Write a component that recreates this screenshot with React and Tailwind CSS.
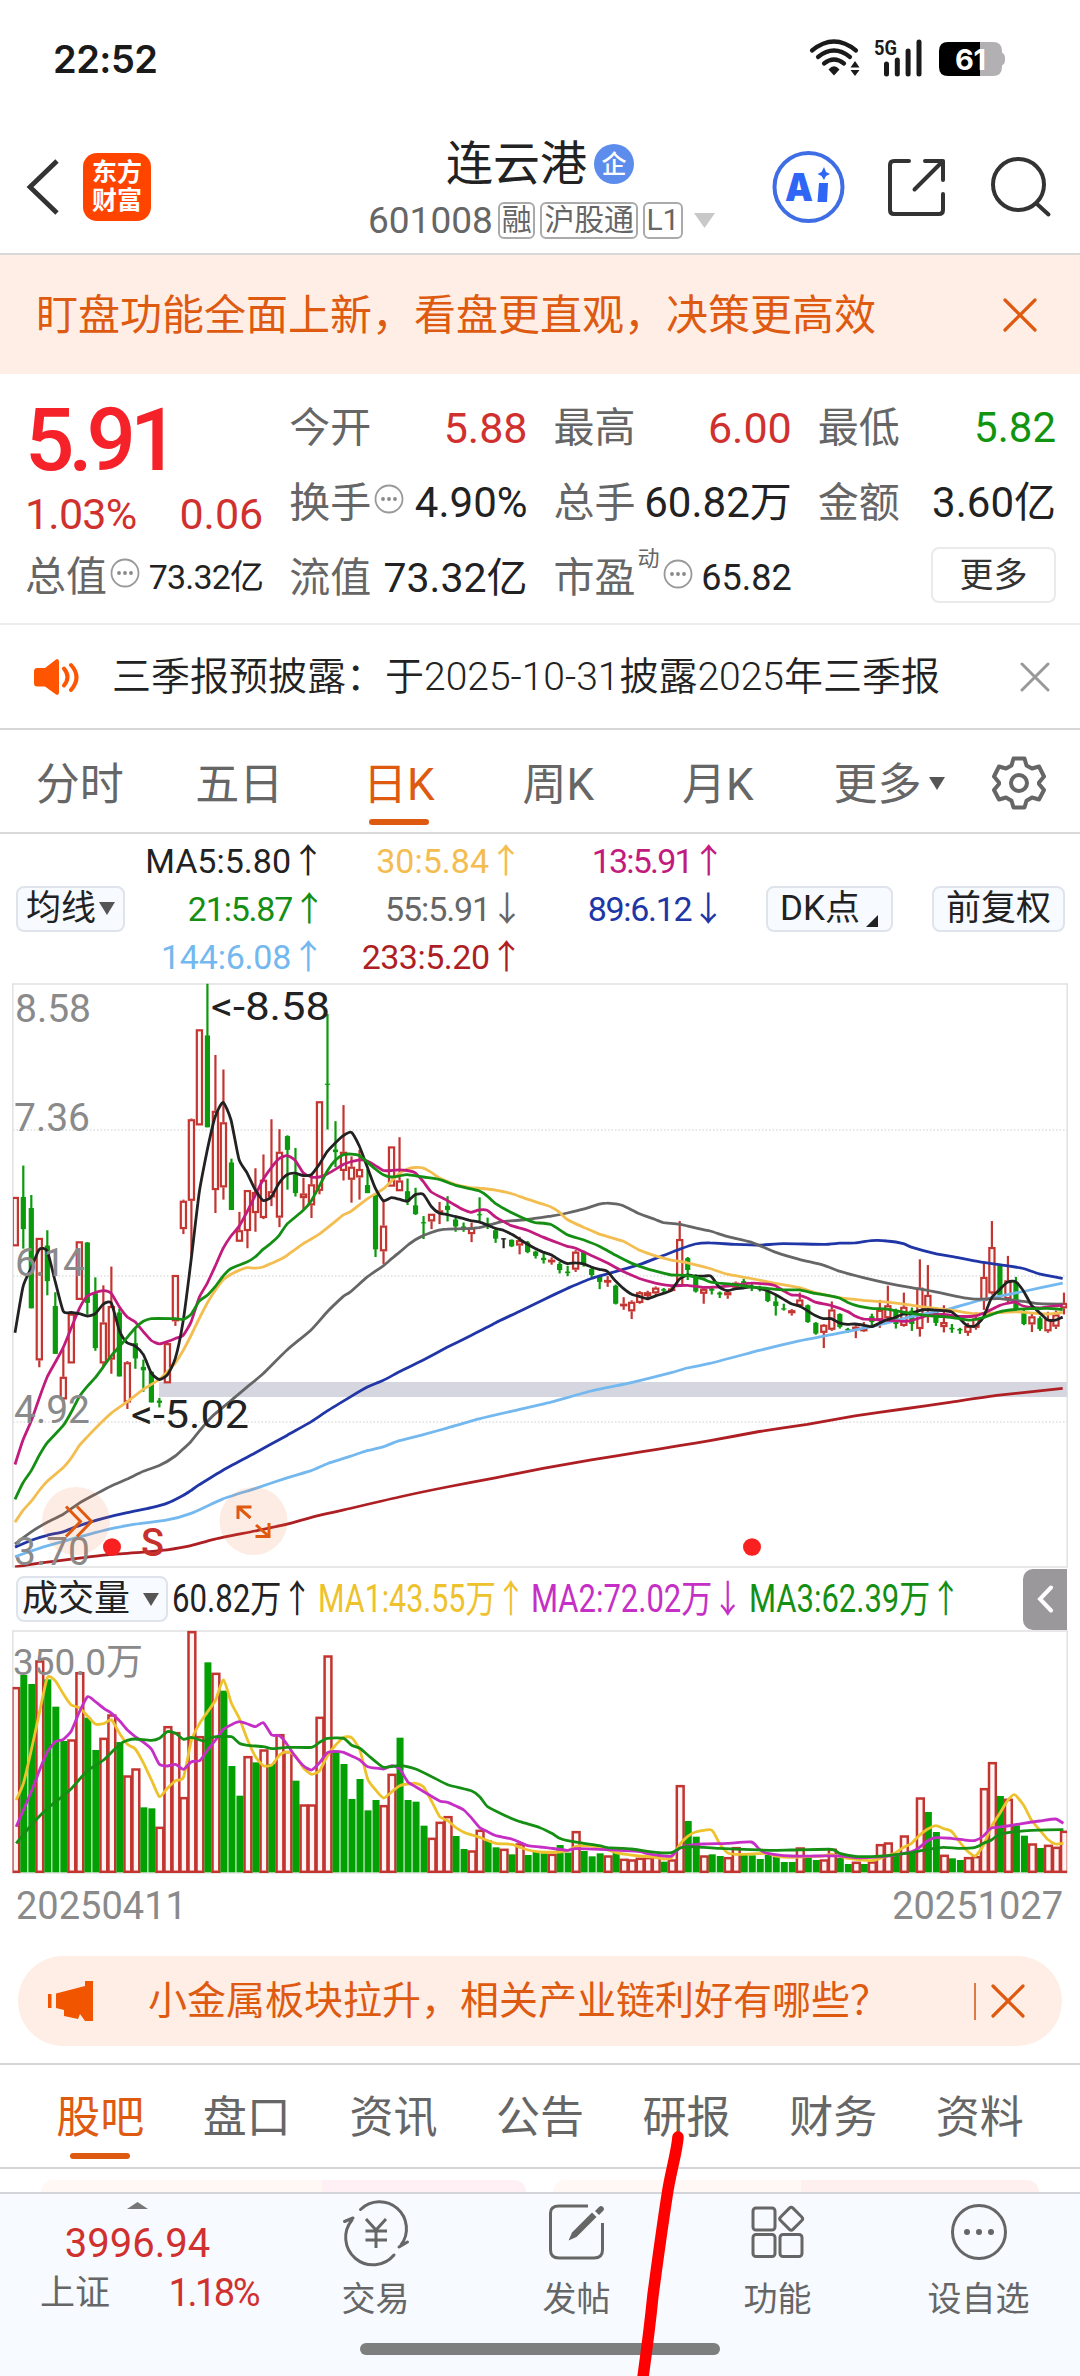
import React from "react";

const RED = "#c23531";
const GREEN = "#0b9a0b";

/* Price chart ------------------------------------------------------- */

const STEP = 8.005;
const barX = (i) => 15.3 + STEP * i;
const priceY = (v) => 970 + v / 2.613;
const volumeY = (v) => 1560 + v / 3;

// kind, high, body top, body bottom, low
const CANDLES = `r593,593,722,722 g511,593,677,728 g588,622,884,884 r700,700,1020,1038 g680,720,813,850 g842,878,1003,1003
r990,1063,1122,1135 r898,898,1028,1028 r709,709,862,862 g711,712,870,900 g803,845,988,995 r824,921,1028,1038
r775,878,1018,1055 g885,895,1062,1062 r1022,1025,1130,1147 g937,975,1015,1042 g1018,1037,1046,1102 g1048,1050,1130,1130
g1118,1125,1131,1143 r975,975,1080,1080 r797,797,918,930 r600,603,677,690 r388,390,603,745 r155,155,406,406
g36,171,411,411 r222,368,575,635 r260,398,568,600 g493,503,627,627 r632,680,710,710 r575,575,682,727
r518,580,635,684 r482,548,648,651 r390,578,594,617 r416,475,647,672 g432,434,470,574 g465,535,583,592
r543,584,596,626 r535,560,615,648 r342,343,577,586 g115,297,299,417 g395,469,476,515 r353,475,525,550
r487,514,548,608 r470,520,542,600 g520,562,583,583 g583,585,730,750 r600,668,735,768 r460,461,566,566
r437,550,578,578 g545,578,606,614 g569,615,638,640 g643,659,662,703 r636,637,657,677 r606,628,632,664
g591,616,627,657 g648,652,670,684 g660,670,675,684 r660,673,690,711 g594,638,641,657 g647,662,668,677
g676,680,702,713 k701,701,704,727 g704,705,722,724 r697,706,720,743 g708,712,737,740 g733,736,747,754
g741,752,758,767 r751,757,761,770 g763,768,784,793 g773,788,792,800 r732,736,783,789 g733,735,770,775
g778,781,797,804 g797,799,815,834 r800,810,815,828 g822,825,872,874 r855,872,878,888 r863,867,892,912
r839,842,870,872 r838,842,852,863 r827,830,845,852 g831,834,838,846 r826,832,837,840 r656,703,826,828
g750,753,784,810 g795,800,840,843 r828,833,846,872 g828,832,838,848 g840,843,848,857 r835,842,850,859
r814,817,830,835 g807,813,825,830 g820,825,830,839 g825,830,834,840 g836,840,865,868 g852,866,878,903
g872,884,887,890 r886,889,897,903 r843,861,878,882 g874,876,920,922 g920,922,950,953 r925,927,948,988
r866,887,940,943 g897,899,933,937 g935,938,942,948 r928,932,937,962 r920,937,944,946 g898,905,920,935
r862,888,915,935 r825,876,910,920 g885,890,925,937 r843,880,930,932 g882,890,925,943 r756,830,938,958
r771,849,890,922 g882,884,922,930 r876,920,933,947 g925,935,939,948 g935,938,942,951 r922,930,948,956
r895,910,935,940 r765,802,865,888 r656,724,845,848 g768,770,850,855 r747,811,860,872 g802,815,885,888
g888,893,925,928 r895,905,926,946 g905,910,938,943 r893,912,944,948 r890,900,932,938 r843,870,884,900`
  .split(/\s+/)
  .map((s) => [s[0], ...s.slice(1).split(",").map(Number)]);

// Each average is sampled in three panes that start at these x positions.
const PANES = [0, 350, 710];
const AVERAGES = [
  ["#ae1f24", "45,1560 118,1550 238,1537 334,1527 430,1521 502,1515 573,1504 645,1487 765,1466 861,1448 958,1425",
    "0,1407 148,1377 291,1351 436,1327 579,1302 724,1280 868,1260 988,1243",
    "0,1230 148,1206 292,1187 435,1165 580,1147 724,1129 868,1111 1058,1093"],
  ["#73b8ef", "45,1533 118,1511 190,1493 262,1476 334,1460 406,1448 502,1437 573,1420 669,1382 765,1355 861,1327 934,1308 982,1290",
    "0,1271 52,1256 100,1246 148,1230 220,1214 291,1197 387,1173 484,1153 603,1129 724,1100 844,1078 964,1052 1012,1040",
    "0,1028 148,994 268,969 364,953 484,932 604,906 724,884 820,861 940,840 1058,818"],
  ["#2036a6", "45,1508 94,1490 142,1477 190,1468 238,1452 310,1433 382,1418 454,1405 502,1393 549,1373 573,1360 598,1345 669,1307 765,1262 861,1216 934,1180 982,1152",
    "0,1116 52,1090 100,1072 148,1050 220,1019 291,986 363,955 436,922 508,892 579,862 652,832 724,806 796,788 868,770 940,746 988,730 1036,716",
    "0,713 75,717 148,719 220,715 340,717 388,714 435,713 484,707 531,708 580,715 604,724 676,741 748,752 820,764 892,773 940,780 988,794 1058,806"],
  ["#666666", "45,1500 94,1468 142,1443 190,1422 238,1393 286,1370 334,1348 382,1330 430,1310 478,1295 526,1270 549,1252 573,1232 598,1205 622,1180 645,1160 693,1125 741,1090 789,1055 861,993 934,940 982,893 1030,853",
    "0,842 52,802 100,773 124,755 148,738 172,720 196,705 220,694 244,686 267,680 291,677 339,676 387,673 436,662 460,657 532,652 603,643 652,635 700,625 748,612 771,609 796,611 820,616 868,637 916,652 940,660 988,664 1036,674",
    "0,682 51,696 123,711 196,737 268,756 340,771 388,787 460,804 531,818 604,830 676,841 748,854 795,860 868,859 940,866 988,872 1058,873"],
  ["#f3bd50", "45,1443 69,1412 94,1388 118,1360 142,1336 190,1300 214,1275 238,1243 262,1220 286,1198 334,1158 382,1128 430,1096 478,1070 502,1050 526,1027 549,995 573,955 598,910 622,870 645,838 669,810 693,795 717,785 741,778 765,779 789,776 813,767 837,758 861,746 910,715 958,690 1006,657 1030,640",
    "4,630 52,598 100,572 124,552 148,532 172,520 196,516 220,518 244,529 267,543 315,560 363,569 387,570 436,575 484,584 532,599 579,612 603,619 627,632 652,652 700,672 748,690 771,696 820,709 868,732 916,747 964,758 1012,765",
    "0,780 51,795 123,806 196,819 268,830 316,843 388,856 460,863 531,868 604,876 652,882 724,889 795,898 868,895 916,893 1012,899 1058,895"],
  ["#c21b7e", "45,1292 69,1228 94,1178 118,1118 142,1063 166,1025 190,986 214,935 238,885 262,852 286,843 310,838 334,845 358,880 382,907 405,919 430,945 454,968 478,977 502,971 526,963 549,955 573,920 598,855 622,818 645,775 669,728 693,695 717,670 741,632 765,590 789,548 813,518 837,493 861,485 885,497 910,530 934,541 958,541 982,533 1006,521 1030,508 1053,501",
    "28,496 52,499 76,511 100,524 124,524 148,522 172,524 196,530 220,553 244,580 291,602 339,626 363,633 387,627 411,628 436,645 460,657 484,668 532,680 579,698 627,714 652,722 677,727 724,746 771,765 820,788 868,806 916,818 964,825 1012,824 1060,829",
    "0,829 27,828 75,824 123,818 172,821 196,825 220,838 244,849 268,850 292,857 316,868 364,877 412,892 435,904 460,912 484,913 531,915 580,918 604,916 652,903 700,900 748,905 795,904 820,897 868,877 892,871 916,868 940,878 988,883 1012,880 1058,876"],
  ["#222222", "45,948 69,828 94,778 118,730 142,735 166,815 190,892 214,895 238,898 262,904 286,898 310,873 334,870 358,942 380,973 405,982 430,1005 454,1053 478,1070 502,1058 526,1015 549,920 573,760 598,580 622,470 645,385 669,346 693,392 717,495 741,530 765,573 789,602 813,594 837,557 861,535 885,531 910,537 934,535 958,508 982,474 1006,452 1030,433",
    "4,424 28,460 52,515 76,570 100,603 124,595 148,599 172,604 196,587 220,586 244,618 267,635 291,639 315,644 339,649 363,655 387,658 411,666 436,675 460,680 484,690 508,703 532,716 556,728 579,737 603,744 627,757 652,767 677,765 700,768 724,776 748,782 771,787 796,812 820,832 844,847 868,853 892,859 916,852 940,845 964,837 988,808 1012,797 1036,800 1060,800",
    "3,800 27,828 51,838 75,833 99,831 123,828 148,832 172,838 196,848 220,860 244,872 268,878 292,890 316,903 340,911 364,911 388,922 412,926 435,925 460,928 484,932 508,923 531,914 555,908 580,899 604,898 627,890 652,887 676,889 700,890 724,893 748,910 771,929 795,930 820,908 844,858 868,836 892,816 916,814 940,838 964,875 988,895 1012,914 1036,915 1058,907"],
  ["#148f14", "45,1383 69,1340 94,1308 118,1268 142,1235 190,1190 214,1155 238,1115 262,1088 286,1065 310,1037 334,1008 382,960 405,936 430,918 454,911 526,911 549,913 573,900 598,865 622,850 645,828 669,800 693,780 741,763 765,750 789,730 813,714 837,694 861,664 910,628 934,603 958,565 982,525 1006,497 1030,483",
    "4,481 28,485 52,502 76,520 100,535 124,541 148,538 172,535 220,541 267,547 315,562 363,572 387,577 411,590 436,610 484,634 532,653 556,660 603,665 652,692 700,705 748,722 796,745 844,766 892,781 940,792 964,797 1012,798 1060,808",
    "0,815 27,818 75,822 123,828 172,832 220,836 268,836 316,845 364,852 388,857 412,868 435,876 484,884 531,886 580,894 652,903 700,906 748,911 780,915 820,908 868,893 916,887 964,885 1012,884 1058,887"],
];

const VOLUMES = `r383 g345 g372 r303 g358 g440 g543 r540 r338 g473 g570 r535 r465 g546 r648 r627 g742 g745 r802 r500 r518 r713
r215 r530 g307 r340 g392 g618 g707 r590 g607 r570 g612 r524 r575 g662 r735 r735 r472 r288 g575 g612 g717 g657 g751 g720 r737
r643 g533 g720 g725 g797 r835 r787 r770 g828 g867 r873 r811 g840 g862 r868 g883 r852 g885 g875 g880 r883 g855 g878 r815 g873
g889 g880 r888 g878 r898 r900 r895 r893 r890 g905 r900 r677 g783 g830 r888 g883 g888 r893 r863 g885 g886 g897 g885 g891 g906
g906 r864 g893 g900 r900 r868 g894 g912 r907 g912 r906 r854 r849 g885 r828 g877 r714 g756 g816 r886 g895 g900 r893 r890 r686
r608 g708 r718 g796 g827 r852 g864 r856 r862 r814`
  .split(/\s+/)
  .map((s) => [s[0], Number(s.slice(1))]);

const VOLUME_PANES = [0, 540];
const VOLUME_AVERAGES = [
  ["#edc22d", "47,720 68,670 91,570 115,455 138,352 161,363 184,402 207,435 231,443 254,468 277,492 301,491 324,480 347,520 370,553 393,567 417,610 440,660 463,710 486,685 510,662 533,652 556,540 580,490 603,455 626,420 649,360 672,430 695,475 719,540 742,590 765,617 789,615 812,585 825,577 842,577 860,590 882,625 905,643 928,632 951,587 975,555 998,532 1021,533 1045,570 1068,658 1091,690 1114,714 1138,695 1161,677 1184,672 1207,670 1231,682 1254,725 1277,770 1300,782 1324,803 1347,817 1370,825 1393,832 1440,850 1486,853 1510,862 1533,870",
    "0,876 57,876 80,872 103,860 127,857 173,862 220,878 243,882 290,888 336,892 359,897 382,893 405,855 428,830 452,816 498,810 521,850 544,878 568,883 614,882 661,880 684,888 730,892 777,890 823,888 847,883 893,895 939,900 963,902 985,896 1032,878 1056,862 1079,850 1102,826 1125,808 1149,797 1172,806 1195,814 1218,845 1241,873 1264,888 1288,855 1311,800 1334,762 1358,722 1378,704 1404,735 1427,780 1451,810 1474,838 1497,852 1520,850"],
  ["#c52fc5", "47,800 91,695 115,630 138,575 161,545 184,538 207,513 231,455 254,410 277,425 301,445 324,460 347,482 370,510 393,530 417,547 440,568 463,613 486,618 510,613 533,628 556,605 580,602 603,570 626,540 649,508 672,494 695,485 719,492 742,500 765,488 789,525 812,527 835,555 858,590 882,618 905,630 928,608 951,578 975,574 998,577 1021,588 1045,600 1068,620 1114,627 1138,617 1161,627 1184,665 1207,680 1231,695 1277,723 1300,727 1324,738 1347,750 1370,775 1393,803 1416,815 1440,827 1486,837 1533,857",
    "0,861 34,865 80,871 103,866 173,868 243,872 290,875 313,881 359,888 382,888 405,865 428,857 475,852 544,850 614,846 637,868 661,880 730,888 800,888 870,888 916,893 963,892 1032,885 1079,875 1102,862 1125,843 1149,833 1195,835 1241,841 1264,841 1288,828 1311,804 1358,798 1404,790 1451,783 1497,777 1520,790"],
  ["#148f14", "47,850 91,795 138,745 184,707 207,686 231,658 254,632 301,600 347,553 370,541 393,537 440,541 463,535 486,515 510,520 533,538 556,532 590,543 603,538 626,530 672,530 695,550 719,556 765,560 790,566 835,562 905,562 928,547 951,535 998,535 1021,556 1045,565 1068,585 1091,605 1114,622 1161,617 1207,627 1254,650 1300,674 1370,693 1393,710 1416,740 1463,765 1510,785",
    "0,803 34,820 57,835 80,842 127,850 173,857 197,863 266,867 336,877 382,878 405,865 428,860 475,862 521,865 614,869 684,871 730,870 847,868 870,880 916,889 963,890 1009,887 1079,878 1125,868 1172,862 1218,865 1264,862 1288,850 1311,840 1334,823 1381,815 1427,811 1520,809"],
];

// Joins the panes of a series into one smooth path.
function smoothPath(segments, starts, xScale, toY) {
  const p = segments.flatMap((seg, k) =>
    seg.split(" ").map((pair) => {
      const [x, v] = pair.split(",").map(Number);
      return [starts[k] + x / xScale, toY(v)];
    })
  );
  let d = `M${p[0][0].toFixed(1)} ${p[0][1].toFixed(1)}`;
  for (let i = 0; i < p.length - 1; i++) {
    const a = p[i - 1] || p[i];
    const b = p[i];
    const c = p[i + 1];
    const e = p[i + 2] || c;
    const t = 10;
    d += `C${[
      b[0] + (c[0] - a[0]) / t, b[1] + (c[1] - a[1]) / t,
      c[0] - (e[0] - b[0]) / t, c[1] - (e[1] - b[1]) / t,
      c[0], c[1],
    ].map((n) => n.toFixed(1)).join(" ")}`;
  }
  return d;
}

function Candle({ i, data }) {
  const [kind, high, top, bottom, low] = data;
  const x = barX(i);
  const [h, t, b, l] = [high, top, bottom, low].map(priceY);
  if (kind === "r") {
    return (
      <g stroke={RED} strokeWidth="2.2" fill="none">
        {t - h > 0.5 && <path d={`M${x} ${h}V${t}`} />}
        {l - b > 0.5 && <path d={`M${x} ${b}V${l}`} />}
        <rect x={x - 2.6} y={t + 1} width="5.2" height={Math.max(b - t - 2, 0.6)} fill="#fff5f4" />
      </g>
    );
  }
  const color = kind === "k" ? "#222" : GREEN;
  return (
    <g fill={color}>
      <rect x={x - 1.1} y={h} width="2.2" height={l - h} />
      <rect x={x - 2.6} y={t} width="5.2" height={Math.max(b - t, 1.2)} />
    </g>
  );
}

function PriceChart() {
  return (
    <svg className="block h-[585px] w-[1080px] shrink-0 overflow-visible" viewBox="0 983 1080 585" fontFamily='Roboto, "Noto Sans CJK SC", sans-serif'>
      <defs>
        <clipPath id="price-frame"><rect x="13" y="983" width="1054" height="584.5" /></clipPath>
      </defs>
      <path d="M13 1130H1067M13 1276H1067M13 1422H1067" stroke="#dedede" strokeWidth="1.3" strokeDasharray="1.5 2" />
      <rect x="12.8" y="984" width="1054.4" height="583" fill="none" stroke="#e3e3e3" strokeWidth="1.6" />
      <rect x="159" y="1382" width="908" height="15" fill="#d5d6df" />
      <g clipPath="url(#price-frame)">
        {CANDLES.map((c, i) => <Candle key={i} i={i} data={c} />)}
        {AVERAGES.map(([color, ...segs]) => (
          <path key={color} d={smoothPath(segs, PANES, 3, priceY)} fill="none" stroke={color} strokeWidth="2.8" strokeLinejoin="round" />
        ))}
      </g>
      <g fill="#8a8a8a" fontSize="39">
        <text x="15" y="1022">8.58</text>
        <text x="14" y="1130.5">7.36</text>
        <text x="15" y="1276" textLength="70">6.14</text>
        <text x="14" y="1422.5">4.92</text>
        <text x="14" y="1565">3.70</text>
      </g>
      <g fill="#222" fontSize="39">
        <text x="211" y="1020" textLength="119" lengthAdjust="spacingAndGlyphs">&lt;-8.58</text>
        <text x="131" y="1428" textLength="118" lengthAdjust="spacingAndGlyphs">&lt;-5.02</text>
      </g>
      <circle cx="76" cy="1521" r="34" fill="#ee6a32" fillOpacity="0.13" />
      <circle cx="253.5" cy="1521" r="34" fill="#ee6a32" fillOpacity="0.13" />
      <g fill="none" stroke="#e0590f" strokeWidth="3">
        <path d="M66 1506.5L80.5 1521.5L66 1536.5M77 1506.5L91.5 1521.5L77 1536.5" />
        <path d="M238 1519V1507H251.5M238 1507L250.5 1518M255.500 1536.5H269V1523M269 1536.5L256 1525" />
      </g>
      <ellipse cx="112" cy="1547" rx="9" ry="8.8" fill="#f82020" />
      <ellipse cx="752" cy="1547" rx="9" ry="8.8" fill="#f82020" />
      <text x="141" y="1556" fontSize="38" fontWeight="500" fill="#c8302d">S</text>
    </svg>
  );
}

function VolumeChart() {
  const base = 1872.3;
  return (
    <svg className="block h-[244px] w-[1080px] shrink-0" viewBox="0 1630 1080 244" fontFamily='Roboto, "Noto Sans CJK SC", sans-serif'>
      <defs>
        <clipPath id="volume-frame"><rect x="12.5" y="1630" width="1054.5" height="243" /></clipPath>
      </defs>
      <rect x="12.8" y="1631" width="1054.4" height="242" fill="none" stroke="#e3e3e3" strokeWidth="1.6" />
      <g clipPath="url(#volume-frame)">
        {VOLUMES.map(([kind, v], i) => {
          const x = barX(i);
          const y = volumeY(v);
          return kind === "r" ? (
            <rect key={i} x={x - 2.9} y={y + 0.5} width="6.8" height={base - y - 1} fill="#fff5f4" stroke={RED} strokeWidth="2.5" />
          ) : (
            <rect key={i} x={x - 3} y={y} width="7" height={base - y} fill="#03a003" />
          );
        })}
        {VOLUME_AVERAGES.map(([color, ...segs]) => (
          <path key={color} d={smoothPath(segs, VOLUME_PANES, 2.904, volumeY)} fill="none" stroke={color} strokeWidth="2.8" strokeLinejoin="round" />
        ))}
      </g>
      <text x="13" y="1674.5" fontSize="37" fill="#8a8a8a">350.0万</text>
    </svg>
  );
}

/* Small pieces ------------------------------------------------------ */

function Cross({ className, size, width = 3 }) {
  return (
    <svg className={className} width={size} height={size} viewBox={`0 0 ${size} ${size}`} fill="none" stroke="currentColor" strokeWidth={width} strokeLinecap="round">
      <path d={`M2 2L${size - 2} ${size - 2}M${size - 2} 2L2 ${size - 2}`} />
    </svg>
  );
}

function Dots() {
  return (
    <svg className="shrink-0" width="30" height="30" viewBox="0 0 30 30">
      <circle cx="15" cy="15" r="13.5" fill="none" stroke="#999" strokeWidth="1.8" />
      <circle cx="9" cy="15" r="1.9" fill="#888" />
      <circle cx="15" cy="15" r="1.9" fill="#888" />
      <circle cx="21" cy="15" r="1.9" fill="#888" />
    </svg>
  );
}

function Caret({ className }) {
  return (
    <svg className={className} viewBox="0 0 16 12" fill="currentColor" preserveAspectRatio="none">
      <path d="M0 0H16L8 12Z" />
    </svg>
  );
}

function StatusBar() {
  return (
    <div className="flex h-[118px] shrink-0 items-center justify-between pl-[53px] pr-[74px]">
      <span className="font-[Inter,sans-serif] text-[38px] leading-none font-semibold tracking-[-0.5px] text-[#1a1a1a]">22:52</span>
      <svg width="197" height="60" viewBox="809 30 197 60">
        <g fill="none" stroke="#1a1a1a" strokeWidth="4.2" strokeLinecap="round">
          <path d="M812 51.5Q834 33.5 856 51.5M818 58Q834 45 850 58M824 64.5Q834 56.5 844 64.5" />
        </g>
        <path d="M828.5 70.5Q834 64 839.5 70.5L834 76.5Z" fill="#1a1a1a" />
        <path d="M850.5 68.5L855 62L859.5 68.5ZM850.5 71L855 77L859.5 71Z" fill="#1a1a1a" />
        <text x="874" y="55.5" fontFamily="Roboto, sans-serif" fontWeight="700" fontSize="21" textLength="23" lengthAdjust="spacingAndGlyphs" fill="#1a1a1a">5G</text>
        <path d="M886.5 65V75M897.3 61V75M908.1 52V75M919 43V75" stroke="#1a1a1a" strokeWidth="5" strokeLinecap="round" />
        <path d="M948 43H980V77H948Q939 77 939 68V52Q939 43 948 43Z" fill="#000" />
        <path d="M980 43H993Q1002 43 1002 52V53.5Q1005 55 1005 59V61Q1005 65 1002 66.5V68Q1002 77 993 77H980Z" fill="#b3b0b4" />
        <text x="955" y="71" fontFamily="Inter, sans-serif" fontWeight="700" fontSize="29" textLength="31" fill="#fff">61</text>
      </svg>
    </div>
  );
}

function Tag({ children }) {
  return (
    <span className="flex h-[37px] shrink-0 items-center rounded-[6px] border-2 border-[#aaa] px-[2px] text-[30px] leading-none tracking-[-0.3px] whitespace-nowrap text-[#666]">{children}</span>
  );
}

function Header() {
  return (
    <header className="flex h-[137px] shrink-0 items-center border-b-2 border-[#d9d9d9] pt-[2px] pl-[26px]">
      <svg width="34" height="58" viewBox="0 0 34 58" fill="none" stroke="#333" strokeWidth="4.8">
        <path d="M31 3L4 29L31 55" />
      </svg>
      <div className="ml-[23px] flex h-[68px] w-[68px] flex-col items-center justify-center rounded-[14px] bg-[#ff4400] text-[25px] leading-[28px] font-bold text-white">
        <span>东方</span>
        <span>财富</span>
      </div>
      <div className="ml-[217px] flex w-[345px] flex-col pt-[6px]">
        <div className="flex h-[54px] items-center pl-[78px]">
          <span className="text-[47px] leading-[54px] text-[#222]">连云港</span>
          <span className="ml-[7px] flex h-[40px] w-[40px] items-center justify-center rounded-full bg-[#5d8dec] text-[25px] leading-none font-medium text-white">企</span>
        </div>
        <div className="mt-[7px] flex h-[44px] items-center gap-[5px]">
          <span className="text-[37px] leading-none text-[#666]">601008</span>
          <Tag>融</Tag>
          <Tag>沪股通</Tag>
          <Tag>L1</Tag>
          <Caret className="ml-[6px] h-[15px] w-[21px] shrink-0 text-[#c8c8c8]" />
        </div>
      </div>
      <svg className="ml-[59px]" width="290" height="74" viewBox="772 150 290 74" fill="none">
        <circle cx="808.5" cy="187" r="34" stroke="#3f6de4" strokeWidth="4" />
        <text x="785" y="201" fontFamily="Inter, sans-serif" fontWeight="900" fontSize="39" textLength="28" lengthAdjust="spacingAndGlyphs" fill="#2f66f6">A</text>
        <path d="M819 183H828L827 202H817.5ZM824 167L826 172L830 174L826 176L824 180L821.5 176L817.5 174L821.5 172Z" fill="#2f66f6" />
        <g stroke="#333" strokeWidth="4" strokeLinecap="round">
          <path d="M909 161H894Q890 161 890 165V210Q890 214 894 214H939Q943 214 943 210V194M925 161H943V180M943 161L914.5 189.5" strokeLinejoin="round" />
          <circle cx="1018.5" cy="184.5" r="25.5" />
          <path d="M1037 204L1048.500 214.5" />
        </g>
      </svg>
    </header>
  );
}

/* Quote ------------------------------------------------------------- */

function Stat({ label, children, dots, sup, className }) {
  return (
    <div className="flex h-[50px] items-center">
      <span className="text-[41px] leading-none whitespace-nowrap text-[#666]">{label}</span>
      {sup && <span className="mb-[38px] ml-[2px] text-[22px] leading-none text-[#666]">{sup}</span>}
      {dots && <span className="mb-[8px] ml-[3px]"><Dots /></span>}
      <span className={`ml-auto leading-none whitespace-nowrap ${className}`}>{children}</span>
    </div>
  );
}

function Quote() {
  return (
    <section className="grid h-[251px] shrink-0 grid-cols-4 gap-x-[26px] border-b-2 border-[#ececec] pt-[29px] pr-[24px] pl-[25px]">
      <div className="flex flex-col">
        <div className="h-[74px] text-[87px] leading-[74px] font-medium tracking-[-6px] text-[#f5222a]">5.91</div>
        <div className="flex h-[75px] items-center justify-between text-[43px] leading-none text-[#d0312f]">
          <span className="tracking-[-0.8px]">1.03%</span>
          <span>0.06</span>
        </div>
        <Stat label="总值" dots className="text-[34px] text-[#222] tracking-[-0.8px]">73.32亿</Stat>
      </div>
      <div className="flex flex-col gap-[25px]">
        <Stat label="今开" className="text-[43px] text-[#d0312f]">5.88</Stat>
        <Stat label="换手" dots className="text-[42px] text-[#222]">4.90%</Stat>
        <Stat label="流值" className="text-[41px] text-[#222]">73.32亿</Stat>
      </div>
      <div className="flex flex-col gap-[25px]">
        <Stat label="最高" className="text-[43px] text-[#d0312f]">6.00</Stat>
        <Stat label="总手" className="text-[42px] text-[#222]">60.82万</Stat>
        <Stat label="市盈" sup="动" dots className="text-[36px] text-[#222]">65.82</Stat>
      </div>
      <div className="flex flex-col gap-[25px]">
        <Stat label="最低" className="text-[42px] text-[#11940f]">5.82</Stat>
        <Stat label="金额" className="text-[42px] text-[#222]">3.60亿</Stat>
        <div className="-mt-[6px] flex h-[56px] w-[125px] items-center justify-center self-end rounded-[8px] border-2 border-[#ebe9e9] text-[34px] leading-none text-[#333]">更多</div>
      </div>
    </section>
  );
}

function Notice() {
  return (
    <section className="flex h-[105px] shrink-0 items-center border-b-2 border-[#d6d6d6] pl-[33px]">
      <svg width="46" height="38" viewBox="0 0 46 38" fill="#ff5500">
        <path d="M4 10H12L23 1.5Q26 0 26 4V34Q26 38 23 36.5L12 28.5H4Q1 28.5 1 25V13.5Q1 10 4 10Z" />
        <path d="M31 10.5Q38 19 31 27.5M38 7Q49 19 38 32" fill="none" stroke="#ff5500" strokeWidth="4" strokeLinecap="round" />
      </svg>
      <span className="mt-[2px] ml-[33px] w-[846px] text-[39px] leading-none font-[350] whitespace-nowrap text-[#222]">三季报预披露：于2025-10-31披露2025年三季报</span>
      <Cross className="ml-[62px] text-[#999]" size={30} />
    </section>
  );
}

function PeriodTabs() {
  const tabs = ["分时", "五日", "日K", "周K", "月K"];
  return (
    <nav className="flex h-[104px] shrink-0 border-b-2 border-[#d9d9d9] text-[44px] leading-none text-[#666]">
      {tabs.map((t) => (
        <div key={t} className="flex w-[159.5px] flex-col items-center pt-[33px]">
          <span className={t === "日K" ? "text-[#de5a10]" : ""}>{t}</span>
          {t === "日K" && <span className="mt-[12px] h-[6px] w-[60px] rounded-full bg-[#de5a10]" />}
        </div>
      ))}
      <div className="flex pt-[33px] pl-[36px]">
        <span>更多</span>
        <Caret className="mt-[14px] ml-[7px] h-[13px] w-[16px] text-[#555]" />
      </div>
      <svg className="mt-[25px] ml-[46px]" width="56" height="56" viewBox="0 0 56 56" fill="none" stroke="#666" strokeWidth="4" strokeLinejoin="round">
        <path d="M22.5 3.5H33.5L35.5 10.5L41 13.5L48 11.5L53 21.5L48 27.5V29L53 35L48 44.5L41 42.5L35.5 45.8L33.5 52.5H22.5L20.5 45.8L15 42.5L8 44.5L3 35L8 29V27.5L3 21.5L8 11.5L15 13.5L20.5 10.5Z" />
        <circle cx="28" cy="28" r="8" />
      </svg>
    </nav>
  );
}

const chip = "flex h-[46px] items-center rounded-[8px] border-2 border-[#dfe3ec] bg-[#f7faff] text-[35px] leading-none text-[#222]";

function AverageLegend() {
  return (
    <section className="flex h-[149px] shrink-0 items-center pl-[16px]">
      <div className={`${chip} w-[109px] justify-center gap-[3px]`}>
        均线<Caret className="h-[13px] w-[16px] text-[#555]" />
      </div>
      <div className="grid h-full w-[599px] grid-cols-[200px_198px_201px] grid-rows-3 content-center items-center justify-items-end pt-[3px] pb-[2px] text-[34px] leading-none">
        <span className="text-[#222]">MA5:5.80↑</span>
        <span className="text-[#f3bd50]">30:5.84↑</span>
        <span className="tracking-[-1.8px] text-[#c21b7e]">13:5.91↑</span>
        <span className="tracking-[-1.2px] text-[#148f14]">21:5.87↑</span>
        <span className="tracking-[-1.1px] text-[#666]">55:5.91↓</span>
        <span className="tracking-[-1.3px] text-[#2036a6]">89:6.12↓</span>
        <span className="tracking-[-0.2px] text-[#73b8ef]">144:6.08↑</span>
        <span className="tracking-[-0.5px] text-[#ae1f24]">233:5.20↑</span>
      </div>
      <div className={`${chip} ml-[42px] w-[127px] pl-[12px]`}>
        DK点
        <svg className="mt-[24px] ml-[6px]" width="12" height="12" viewBox="0 0 12 12"><path d="M12 0V12H0Z" fill="#222" /></svg>
      </div>
      <div className={`${chip} ml-[39px] w-[133px] justify-center`}>前复权</div>
    </section>
  );
}

function VolumeLegend() {
  return (
    <section className="flex h-[62px] shrink-0 items-center pl-[16px]">
      <div className={`${chip} w-[152px] gap-[13px] pl-[4px] text-[36px]`}>
        成交量<Caret className="h-[13px] w-[16px] text-[#555]" />
      </div>
      <div className="ml-[4px] flex w-[851px] text-[38px] leading-none whitespace-nowrap">
        <span className="w-[146px]"><span className="inline-block origin-left scale-x-[0.82] text-[#222]">60.82万↑</span></span>
        <span className="w-[213px]"><span className="inline-block origin-left scale-x-[0.8] text-[#edc22d]">MA1:43.55万↑</span></span>
        <span className="w-[218px]"><span className="inline-block origin-left scale-x-[0.815] text-[#c52fc5]">MA2:72.02万↓</span></span>
        <span className="w-[213px]"><span className="inline-block origin-left scale-x-[0.815] text-[#148f14]">MA3:62.39万↑</span></span>
      </div>
      <div className="flex h-[61px] w-[44px] items-center justify-center rounded-l-[10px] bg-[#9b989b]">
        <svg width="17" height="28" viewBox="0 0 17 28" fill="none" stroke="#fff" strokeWidth="4" strokeLinecap="round"><path d="M14 2.5L3 14L14 25.5" /></svg>
      </div>
    </section>
  );
}

function PromoBar() {
  return (
    <section className="mx-[18px] flex h-[90px] shrink-0 items-center rounded-full bg-[#ffeee6] pl-[29px] text-[#de5a10]">
      <svg width="47" height="40" viewBox="0 0 47 40" fill="#f25500">
        <path d="M1 13H4.5V27H1ZM9 12.5L38 5V0H46V40H38L33 33L31 38L17 35V29L9 27Z" />
      </svg>
      <span className="ml-[54px] w-[742px] text-[39px] leading-none whitespace-nowrap">小金属板块拉升，相关产业链利好有哪些？</span>
      <span className="ml-[84px] h-[37px] w-[2px] bg-[#de7a48]" />
      <Cross className="ml-[15px]" size={34} width={3.2} />
    </section>
  );
}

function DetailTabs() {
  const tabs = ["股吧", "盘口", "资讯", "公告", "研报", "财务", "资料"];
  return (
    <nav className="flex h-[106px] shrink-0 border-y-2 border-[#d6d6d9] px-[27px] text-[44px] leading-none text-[#666]">
      {tabs.map((t, i) => (
        <div key={t} className="flex flex-1 flex-col items-center pt-[31px]">
          <span className={i === 0 ? "text-[#de5a10]" : ""}>{t}</span>
          {i === 0 && <span className="mt-[13px] h-[6px] w-[60px] rounded-full bg-[#de5a10]" />}
        </div>
      ))}
    </nav>
  );
}

function NavItem({ label, children }) {
  return (
    <div className="flex w-[201px] flex-col items-center pt-[7px]">
      <svg className="overflow-visible" width="66" height="62" viewBox="0 0 66 62" fill="none" stroke="#666" strokeWidth="3">{children}</svg>
      <span className="mt-[19px] text-[34px] leading-none text-[#666]">{label}</span>
    </div>
  );
}

function BottomBar() {
  return (
    <footer className="flex h-[184px] shrink-0 flex-col border-t-2 border-[#d4d5da] bg-[#f7faff]">
      <div className="flex h-[149px]">
        <div className="flex w-[275px] flex-col items-center pt-[8px]">
          <Caret className="h-[7px] w-[21px] rotate-180 text-[#777]" />
          <span className="mt-[13px] text-[40px] leading-[44px] text-[#d0312f]">3996.94</span>
          <div className="mt-[5px] ml-[23px] flex h-[44px] w-[218px] items-center justify-between">
            <span className="text-[35px] leading-none text-[#666]">上证</span>
            <span className="text-[38px] leading-none tracking-[-2.5px] text-[#d0312f]">1.18%</span>
          </div>
        </div>
        <NavItem label="交易">
          <path d="M17.5 8.5A27 27 0 0 1 58 44M51 54A27 27 0 0 1 9 19M1.5 20.5L10 17M56 46L64.5 41" strokeLinecap="round" />
          <path d="M23 18L33 29L43 18M22.5 30H44M22.5 39H44M33 29V47" />
        </NavItem>
        <NavItem label="发帖">
          <path d="M44 5H15Q6.5 5 6.5 12V49Q6.5 57 15 57H50Q58.5 57 58.5 49V22" />
          <path d="M24.5 39.5L28 31.5L48 11.5L52.5 16L32.5 36Z" fill="#666" stroke="none" />
          <path d="M51 10L55 6Q57 4 59 6T59 10L55 14Z" fill="#666" stroke="none" />
        </NavItem>
        <NavItem label="功能">
          <rect x="8" y="7" width="22" height="22" rx="3" />
          <rect x="8" y="33.5" width="22" height="22" rx="3" />
          <rect x="35" y="33.5" width="22" height="22" rx="3" />
          <rect x="37.5" y="9" width="17.5" height="17.5" rx="2.5" transform="rotate(45 46.2 17.7)" />
        </NavItem>
        <NavItem label="设自选">
          <circle cx="33" cy="31" r="26.5" />
          <g fill="#666" stroke="none"><circle cx="21" cy="31" r="3" /><circle cx="33" cy="31" r="3" /><circle cx="45" cy="31" r="3" /></g>
        </NavItem>
      </div>
      <div className="mx-auto h-[12px] w-[360px] rounded-full bg-[#7c7f7d]" />
    </footer>
  );
}

export default function App() {
  return (
    <div className="relative flex h-[2376px] w-[1080px] flex-col overflow-hidden bg-white font-[Roboto,'Noto_Sans_CJK_SC',sans-serif]">
      <StatusBar />
      <Header />
      <section className="flex h-[119px] shrink-0 items-center bg-[#ffeee6] pl-[36px] text-[#de5a10]">
        <span className="mt-[3px] w-[844px] text-[42px] leading-none whitespace-nowrap">盯盘功能全面上新，看盘更直观，决策更高效</span>
        <Cross className="ml-[123px]" size={34} width={3.2} />
      </section>
      <Quote />
      <Notice />
      <PeriodTabs />
      <AverageLegend />
      <PriceChart />
      <VolumeLegend />
      <VolumeChart />
      <div className="flex h-[82px] shrink-0 items-center justify-between pr-[17px] pb-[18px] pl-[16px] text-[38px] leading-none text-[#8a8a8a]">
        <span>20250411</span>
        <span>20251027</span>
      </div>
      <PromoBar />
      <div className="h-[17px] shrink-0" />
      <DetailTabs />
      <div className="flex h-[23px] shrink-0 items-end gap-[27px] px-[41px]">
        <div className="h-[12px] w-[489px] rounded-t-[20px] bg-linear-to-r from-[#fff8f4] from-58% to-[#fef0f5] to-58%" />
        <div className="h-[12px] w-[491px] rounded-t-[20px] bg-linear-to-r from-[#fff8f4] from-51% to-[#fff0f0] to-51%" />
      </div>
      <BottomBar />
      <svg className="pointer-events-none absolute top-[2120px] left-[630px]" width="70" height="256" viewBox="630 2120 70 256" fill="none" stroke="#fe0000" strokeWidth="11.5" strokeLinecap="round" strokeLinejoin="round">
        <path d="M678 2137C677 2152 670 2174 667 2196C661 2235 658 2258 653 2295C650 2325 646 2356 642 2384" />
      </svg>
    </div>
  );
}
